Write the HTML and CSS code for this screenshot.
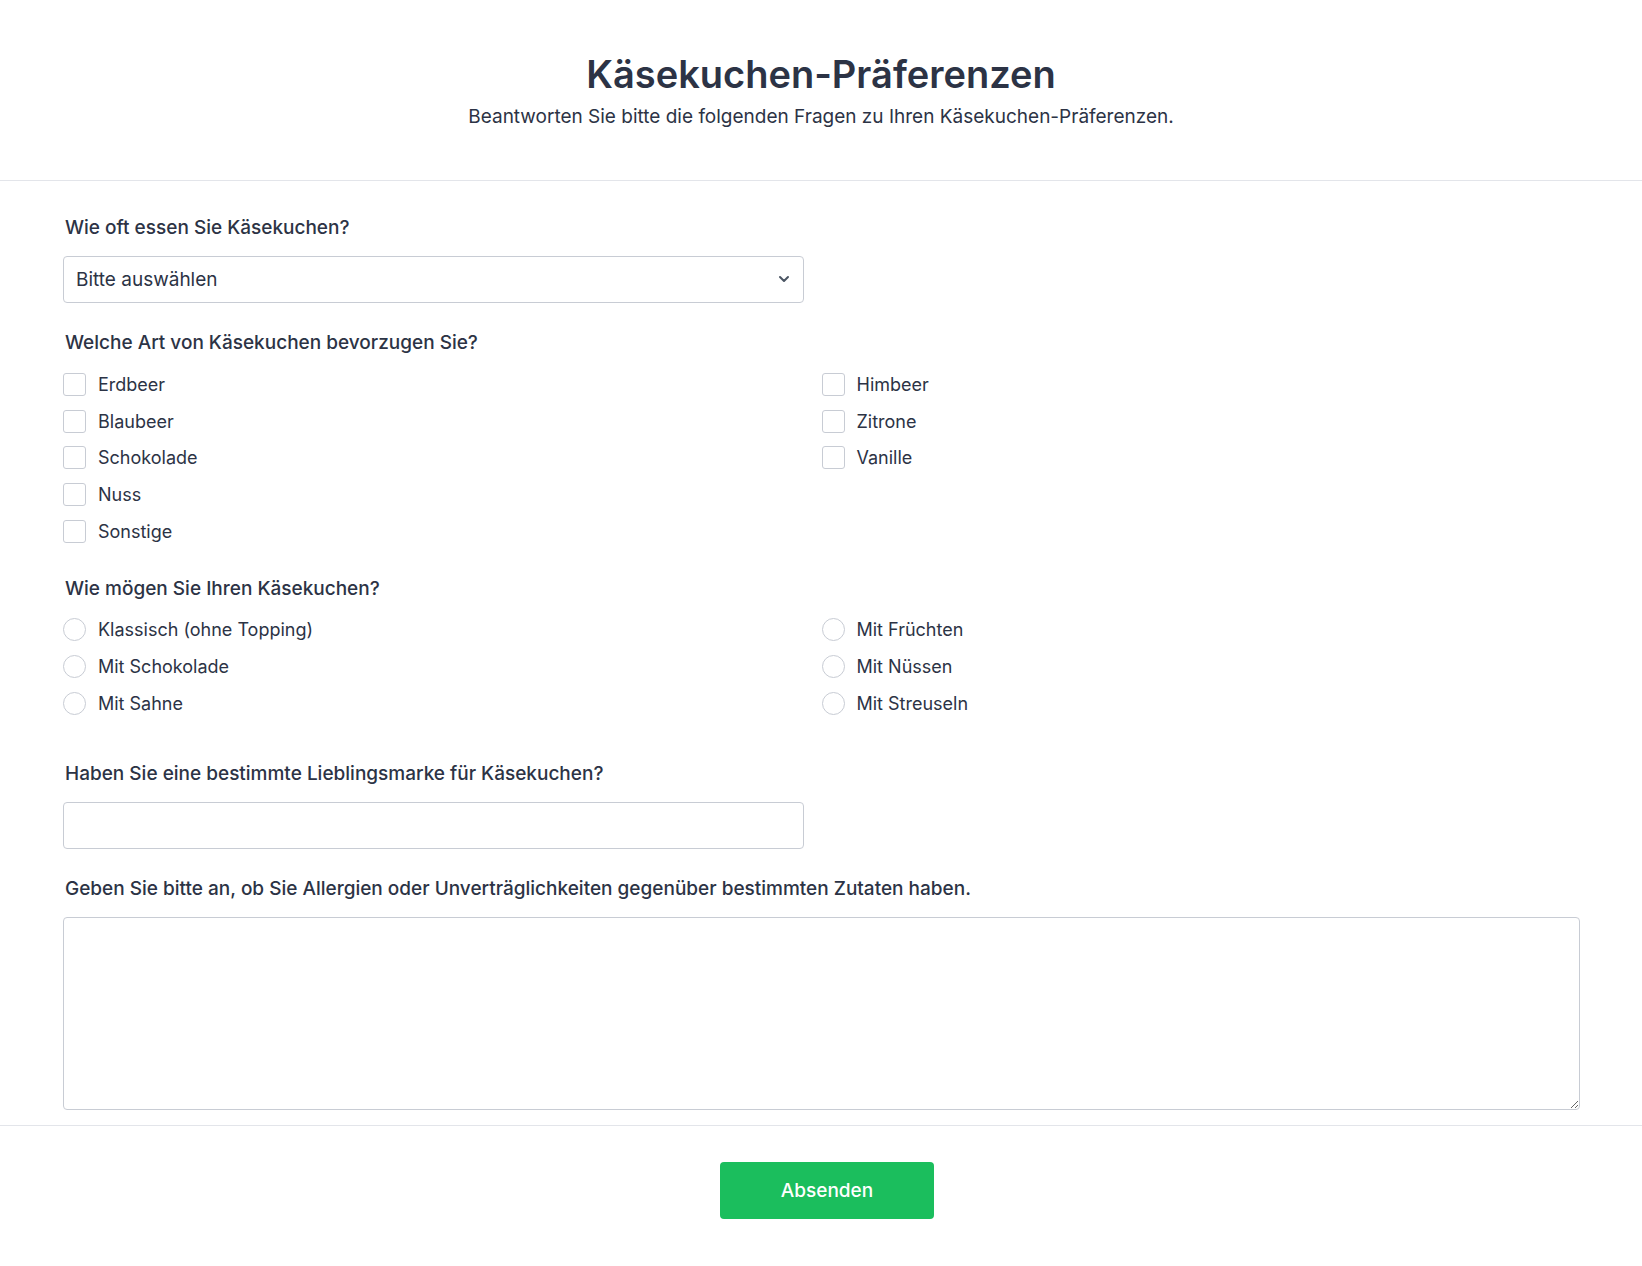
FILE: index.html
```html
<!DOCTYPE html>
<html lang="de">
<head>
  <meta charset="UTF-8">
  <meta name="viewport" content="width=device-width, initial-scale=1.0">
  <title>Käsekuchen-Präferenzen</title>
  <link rel="stylesheet" href="styles.css">
</head>
<body>
  <header class="form-header">
    <h1>Käsekuchen-Präferenzen</h1>
    <p>Beantworten Sie bitte die folgenden Fragen zu Ihren Käsekuchen-Präferenzen.</p>
  </header>

  <form class="form-body" onsubmit="return false;">
    <div class="field">
      <label class="question" for="frequency">Wie oft essen Sie Käsekuchen?</label>
      <div class="select-wrap half">
        <select id="frequency">
          <option>Bitte auswählen</option>
          <option>Täglich</option>
          <option>Wöchentlich</option>
          <option>Monatlich</option>
          <option>Selten</option>
        </select>
        <svg class="chevron" width="14" height="14" viewBox="0 0 14 14"><path d="M3 5l4 4 4-4" fill="none" stroke="#4b5563" stroke-width="2" stroke-linecap="round" stroke-linejoin="round"/></svg>
      </div>
    </div>

    <div class="field">
      <p class="question">Welche Art von Käsekuchen bevorzugen Sie?</p>
      <div class="options">
        <div class="col">
          <label class="option"><input type="checkbox"> Erdbeer</label>
          <label class="option"><input type="checkbox"> Blaubeer</label>
          <label class="option"><input type="checkbox"> Schokolade</label>
          <label class="option"><input type="checkbox"> Nuss</label>
          <label class="option"><input type="checkbox"> Sonstige</label>
        </div>
        <div class="col">
          <label class="option"><input type="checkbox"> Himbeer</label>
          <label class="option"><input type="checkbox"> Zitrone</label>
          <label class="option"><input type="checkbox"> Vanille</label>
        </div>
      </div>
    </div>

    <div class="field field-wide">
      <p class="question">Wie mögen Sie Ihren Käsekuchen?</p>
      <div class="options radios">
        <div class="col">
          <label class="option"><input type="radio" name="style"> Klassisch (ohne Topping)</label>
          <label class="option"><input type="radio" name="style"> Mit Schokolade</label>
          <label class="option"><input type="radio" name="style"> Mit Sahne</label>
        </div>
        <div class="col">
          <label class="option"><input type="radio" name="style"> Mit Früchten</label>
          <label class="option"><input type="radio" name="style"> Mit Nüssen</label>
          <label class="option"><input type="radio" name="style"> Mit Streuseln</label>
        </div>
      </div>
    </div>

    <div class="field">
      <label class="question" for="brand">Haben Sie eine bestimmte Lieblingsmarke für Käsekuchen?</label>
      <input class="text-input half" type="text" id="brand">
    </div>

    <div class="field">
      <label class="question" for="allergies">Geben Sie bitte an, ob Sie Allergien oder Unverträglichkeiten gegenüber bestimmten Zutaten haben.</label>
      <textarea id="allergies"></textarea>
    </div>
  </form>

  <footer class="form-footer">
    <button type="button">Absenden</button>
  </footer>
</body>
</html>
```

FILE: styles.css
```css
body {
  margin: 0;
  font-family: 'Inter', 'Liberation Sans', sans-serif;
  color: #2c3345;
  background: #fff;
}
.form-header {
  text-align: center;
  padding: 52px 20px 49px;
  border-bottom: 1px solid #e3e5ea;
}
.form-header h1 {
  margin: 0;
  font-size: 38px;
  line-height: 44px;
  font-weight: 600;
}
.form-header p {
  margin: 7px 0 0;
  font-size: 19px;
  line-height: 28px;
}
.form-body {
  padding: 33px 62px 15px 63px;
  border-bottom: 1px solid #e3e5ea;
}
.field {
  margin-bottom: 26px;
}
.field-wide {
  margin-bottom: 38px;
}
.field:last-child {
  margin-bottom: 0;
}
.question {
  display: block;
  margin: 0 0 14px 2px;
  font-size: 19px;
  line-height: 28px;
  font-weight: 500;
}
.half {
  width: 741px;
}
.select-wrap {
  position: relative;
}
select {
  width: 100%;
  height: 47px;
  padding: 0 40px 0 12px;
  border: 1px solid #c8ccd4;
  border-radius: 4px;
  background: #fff;
  font-family: inherit;
  font-size: 19px;
  color: #2c3345;
  appearance: none;
  -webkit-appearance: none;
}
.chevron {
  position: absolute;
  right: 13px;
  top: 16px;
  pointer-events: none;
}
.options {
  display: grid;
  grid-template-columns: 1fr 1fr;
  margin-top: -5px;
}
.radios {
  margin-top: -6px;
}
.option {
  display: flex;
  align-items: center;
  gap: 12px;
  height: 36.7px;
  font-size: 18px;
}
.option input {
  appearance: none;
  -webkit-appearance: none;
  width: 23px;
  height: 23px;
  margin: 0;
  border: 1px solid #c8ccd4;
  border-radius: 3px;
  background: #fff;
}
.option input[type="radio"] {
  border-radius: 50%;
}
.text-input {
  display: block;
  height: 47px;
  box-sizing: border-box;
  border: 1px solid #c8ccd4;
  border-radius: 4px;
  padding: 0 12px;
  font-family: inherit;
  font-size: 19px;
}
textarea {
  display: block;
  width: 100%;
  height: 193px;
  box-sizing: border-box;
  border: 1px solid #c8ccd4;
  border-radius: 4px;
  padding: 10px 12px;
  font-family: inherit;
  font-size: 19px;
}
.form-footer {
  display: flex;
  justify-content: center;
  padding: 36px 0 40px 12px;
}
button {
  width: 214px;
  height: 57px;
  border: none;
  border-radius: 4px;
  background: #1bbe5d;
  color: #fff;
  font-family: inherit;
  font-size: 19px;
  font-weight: 500;
  cursor: pointer;
}
button:hover {
  background: #17a852;
}
```
